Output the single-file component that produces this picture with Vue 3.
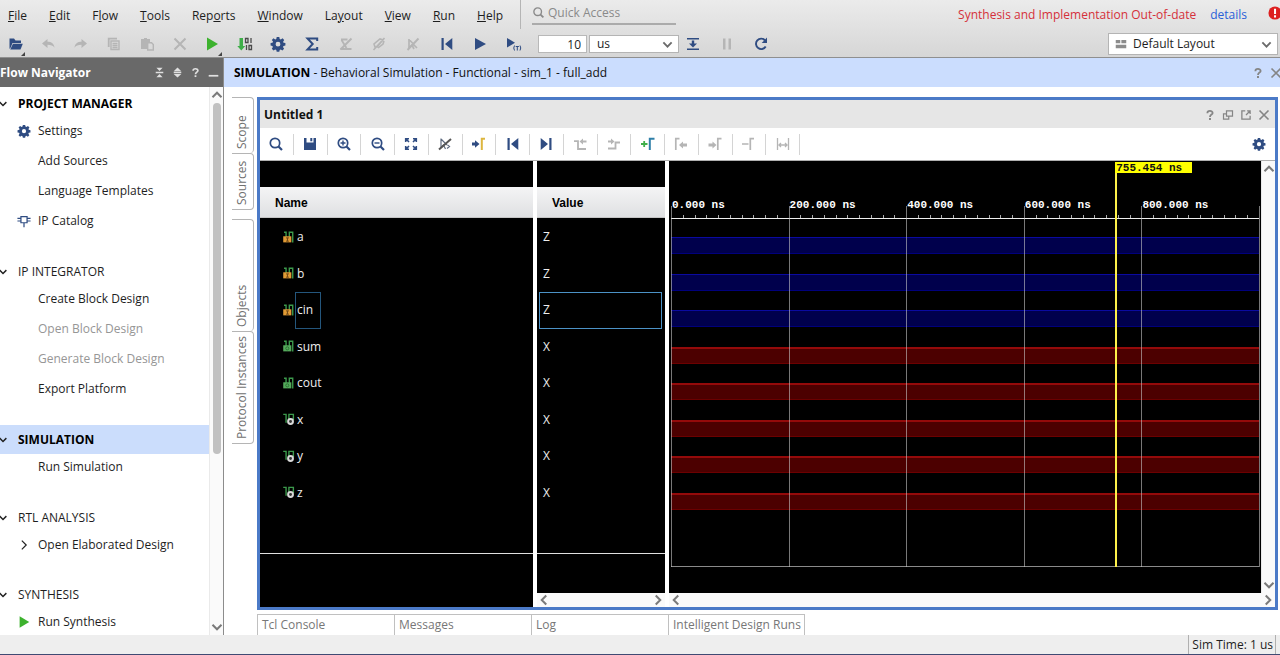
<script setup>
import { ref } from 'vue'

const N = '#2f4c82'
const G = '#b5b5b5'

const gear = `<path fill="${N}" fill-rule="evenodd" d="M6.700 1h2.600l.4 1.900 1.100.5 1.700-1.100 1.700 1.700-1.100 1.700.4 1 1.900.4v2.500l-1.900.4-.5 1.100 1.100 1.700-1.700 1.700-1.700-1.100-1 .5-.4 1.900H6.700l-.4-1.900-1.100-.5-1.700 1.100-1.700-1.700 1.100-1.700-.5-1.100L.6 9.600V7.100l1.900-.4.5-1.100-1.200-1.600 1.700-1.700 1.700 1.100 1.100-.5zM8 5.800a2.400 2.400 0 1 0 0 4.800 2.400 2.400 0 0 0 0-4.800z"/>`
const lens = (inner, c = N) => `<circle cx="7" cy="7" r="4.700" fill="none" stroke="${c}" stroke-width="1.700"/><path d="M10.500 10.500l3.500 3.500" stroke="${c}" stroke-width="2.200"/>${inner}`
const stroke = (d, c = N, w = 1.5) => `<path d="${d}" fill="none" stroke="${c}" stroke-width="${w}"/>`
const fill = (d, c = N) => `<path d="${d}" fill="${c}"/>`
const corner = fill('M16 12v4h-4z', '#444')

const icons = {
  open: fill('M1.500 2.500h4.500l1.500 2H13V7H4.500L2.700 11.500 1.500 13z') + fill('M5 7.800h9.800L12.500 13.500H2.200z'),
  undo: fill('M2 7.500l5.500-4.500v2.800c4 0 6.500 1.700 7 6-1.500-2.300-3.500-3-7-3V12z', G),
  redo: fill('M14 7.500L8.500 3v2.800c-4 0-6.500 1.700-7 6 1.500-2.300 3.500-3 7-3V12z', G),
  copy: stroke('M2.700 11V2.700H11', G, 1.800) + stroke('M5 5h8v8.500H5zM6.500 7.500h5M6.500 9.500h5M6.500 11.500h5', G, 1.400),
  paste: fill('M2 3h3V2h3v1h3v3H8v7H2z', G) + stroke('M8.700 6.700h3.800l1.800 1.800v5.500H8.700z', G, 1.400),
  close: stroke('M2.500 2.500l11 11M13.500 2.500l-11 11', G, 2),
  run: fill('M3 1.500l11 6.500L3 14.500z', '#3db22e'),
  bits: fill('M2.500 2h3.500v8h2.300l-4 4.500L.3 10h2.200z', '#3fae49') + stroke('M8.500 2.500h2.500v4H8.500zM14 2v5M9.500 9v5M12 9.500h2.500v4H12z', '#4a4a4a', 1.300),
  gear,
  sigma: stroke('M13.200 5V2.500H3.500L8.700 8l-5.200 5.500h9.700V11', N, 2),
  cutA: stroke('M3 3.500h6.500M3.500 4l5 8M2.500 13h11', G, 1.800) + stroke('M2.500 13.500l11-11', G, 2),
  cutB: stroke('M4 11l-1-3 6-5 3 1-6 7zM7 12l5-4 1-3M2.500 14l11-12', G, 1.600),
  cutC: stroke('M4 3v9l3-3 2 4M8 8l4 4M4 3.500l4 4', G, 1.700) + stroke('M2.500 14l11-11.500', G, 1.900),
  first: fill('M2.500 2h2.200v12H2.500zM13.300 2v12L6 8z'),
  last: fill('M11.300 2h2.200v12h-2.200zM2.700 2v12L10 8z'),
  play: fill('M3 2l11 6-11 6z'),
  playT: fill('M1 2l8 4.800-8 4.800z') + stroke('M8.500 9.500q-1.500 2.500 0 5M14 9.500q1.500 2.500 0 5M9.700 10.500h3.200M11.300 10.500v4', N, 1),
  step: fill('M2 2h12v1.600H2zM2 12.400h12V14H2zM6.800 4.500h2.400v3H12l-4 4-4-4h2.800z'),
  pause: fill('M4 2.500h2.500v11H4zM9.500 2.500H12v11H9.500z', G),
  reload: stroke('M12.700 10.500A5.200 5.200 0 1 1 12 4.300', N, 1.900) + fill('M14 1.500v5.500H8.700z'),
  search: lens(''),
  save: fill('M2 2h2.500v4.500h7V2H14v12H2zM8.300 2h2v3.300h-2z'),
  zoomIn: lens(stroke('M4.500 7h5M7 4.500v5', N, 1.400)),
  zoomOut: lens(stroke('M4.500 7h5', N, 1.400)),
  fit: stroke('M2.700 6V2.700H6M10 2.700h3.300V6M13.300 10v3.300H10M6 13.300H2.700V10M3 3l3 3M13 3l-3 3M13 13l-3-3M3 13l3-3', N, 1.600),
  noCursor: stroke('M4 2.500v9l2.500-2.500L8.500 13M4 3l6 6M10.500 9l2 1.500-2.500 2', '#5f6b80', 1.200) + stroke('M2 13.500L14 3', '#555', 2),
  toCursor: fill('M1 6.500h3V4.300L8.500 8 4 11.700V9.500H1z') + stroke('M10.800 14V2.700H14', '#ddb63f', 2),
  prevEdge: stroke('M2 5.200h4V13h8', G, 1.800) + fill('M7.500 5.500L11 2.500v2h3.500v2H11v2z', G),
  nextEdge: stroke('M2 12.500h7.500V6.500H14', G, 1.800) + fill('M8.500 5.500L5 2.500v2H2v2h3v2z', G),
  addMark: stroke('M1 8h6.500M4.200 5v6', '#3fae49', 1.800) + stroke('M9.800 14V2.700H14.500', '#2f7fa8', 2),
  prevMark: stroke('M2.800 14V2.700H6.500', G, 1.700) + fill('M6 9l4-3.500v2h4v3h-4v2z', G),
  nextMark: stroke('M10.800 14V2.700H14.500', G, 1.700) + fill('M9.500 9L5.500 5.500v2h-4v3h4v2z', G),
  delMark: stroke('M1 8h6.500M9.300 14V2.700H13', G, 1.700),
  swap: stroke('M2.500 2v12M13.500 2v12M4 9h8M6 7L4 9l2 2M10 7l2 2-2 2', G, 1.300),
  help: stroke('M4.500 5.500C4.500 1.500 11.500 1.700 11.500 5.200 11.500 7.500 8 7.500 8 10.500', 'currentColor', 2.400) + fill('M6.700 12h2.600v2.600H6.700z', 'currentColor'),
  min: fill('M1 11.500h14V14H1z', 'currentColor'),
  collapse: fill('M2.500 7h11v2h-11zM3.500 1h9L8 5.700zM3.500 15h9L8 10.300z', 'currentColor'),
  expand: fill('M2.500 7h11v2h-11zM2.500 6L8 .8 13.500 6zM2.500 10L8 15.200 13.500 10z', 'currentColor'),
  x: stroke('M2 2l12 12M14 2L2 14', 'currentColor', 2.200),
  restore: stroke('M6 2.500h8v7H6zM9 9.500v4H2v-7h4', 'currentColor', 1.600),
  popout: stroke('M7 2.500H2.500v11h11V9M9.500 2.500h4v4M8 8l5-5', 'currentColor', 1.700),
  down: stroke('M2 5l6 6 6-6', 'currentColor', 2.700),
  up: stroke('M2 11l6-6 6 6', 'currentColor', 2.700),
  left: stroke('M11 2L5 8l6 6', 'currentColor', 2.700),
  right: stroke('M5 2l6 6-6 6', 'currentColor', 2.700),
  thinDown: stroke('M3.500 5.500L8 10l4.500-4.500', '#222', 1.900),
  thinRight: stroke('M5.500 3l5 5-5 5', '#222', 1.400),
  chip: stroke('M4.500 3h7v7h-7zM.5 5h4M.5 8h4M11.500 5h4M11.500 8h4M8 10v5', N, 1.400),
  layout: fill('M1 2.500h6v4.500H1zM8.500 2.500H15v4.500H8.500zM1 9h14v4.500H1z', '#8c8c8c'),
  alert: '<circle cx="8" cy="8" r="7.500" fill="#dd2020"/>' + fill('M6.900 3h2.300v6.200H6.900zM6.900 10.700h2.300v2.300H6.900z', '#fff'),
  input: stroke('M2.500 1.500H5V8M9 8V1.500h4.200V14', '#3c9a4c', 1.700) + fill('M1.500 6.500h10V14h-10z', '#e09a35') + stroke('M5 8.500h3.500M6.700 8.500v4M5 12.500h3.500', '#6d4715', 1.200),
  output: stroke('M2.500 1.500H5V8M9 8V1.500h4.200V14', '#3c9a4c', 1.700) + fill('M1.500 6.500h10V14h-10z', '#55a95c') + '<circle cx="6.500" cy="10.300" r="1.900" fill="none" stroke="#256a2d"/>',
  wire: stroke('M1.500 1.700H5V12M8.500 8V1.700H14V9', '#3c9a4c', 1.700) + '<circle cx="10.500" cy="10.500" r="3" fill="#333" stroke="#d8d8d8" stroke-width="2.400"/>',
}

const menus = [
  ['', 'F', 'ile'], ['', 'E', 'dit'], ['F', 'l', 'ow'], ['', 'T', 'ools'], ['Rep', 'o', 'rts'],
  ['', 'W', 'indow'], ['La', 'y', 'out'], ['', 'V', 'iew'], ['', 'R', 'un'], ['', 'H', 'elp'],
]

const mainTools = [
  ['open', 'Open', true], ['undo', 'Undo'], ['redo', 'Redo'], ['copy', 'Copy'], ['paste', 'Paste'],
  ['close', 'Delete'], ['run', 'Run', true], ['bits', 'Generate Bitstream'], ['gear', 'Settings'],
  ['sigma', 'Reports'], ['cutA', 'Mark'], ['cutB', 'Link'], ['cutC', 'Unselect'],
  ['first', 'Restart'], ['play', 'Run All'], ['playT', 'Run For'],
]
const simTools = [['step', 'Step'], ['pause', 'Break'], ['reload', 'Relaunch']]
const waveTools = [
  ['search', 'Find'], ['save', 'Save'], ['zoomIn', 'Zoom In'], ['zoomOut', 'Zoom Out'], ['fit', 'Zoom Fit'],
  ['noCursor', 'Pointer'], ['toCursor', 'Go to Cursor'], ['first', 'Go to Start'], ['last', 'Go to End'],
  ['prevEdge', 'Previous Transition'], ['nextEdge', 'Next Transition'], ['addMark', 'Add Marker'],
  ['prevMark', 'Previous Marker'], ['nextMark', 'Next Marker'], ['delMark', 'Delete Marker'], ['swap', 'Swap Cursors'],
]

const sections = [
  { title: 'PROJECT MANAGER', bold: true, items: [
    { text: 'Settings', icon: 'gear' }, { text: 'Add Sources' }, { text: 'Language Templates' }, { text: 'IP Catalog', icon: 'chip' }] },
  { title: 'IP INTEGRATOR', items: [
    { text: 'Create Block Design' }, { text: 'Open Block Design', off: true }, { text: 'Generate Block Design', off: true }, { text: 'Export Platform' }] },
  { title: 'SIMULATION', bold: true, active: true, items: [{ text: 'Run Simulation' }] },
  { title: 'RTL ANALYSIS', items: [{ text: 'Open Elaborated Design', icon: 'thinRight' }] },
  { title: 'SYNTHESIS', items: [{ text: 'Run Synthesis', icon: 'run' }] },
]

const signals = [
  { name: 'a', value: 'Z', icon: 'input' }, { name: 'b', value: 'Z', icon: 'input' },
  { name: 'cin', value: 'Z', icon: 'input' }, { name: 'sum', value: 'X', icon: 'output' },
  { name: 'cout', value: 'X', icon: 'output' }, { name: 'x', value: 'X', icon: 'wire' },
  { name: 'y', value: 'X', icon: 'wire' }, { name: 'z', value: 'X', icon: 'wire' },
]
const selected = ref('cin')
const cursor = 755.454
const span = 1000
const marks = [0, 200, 400, 600, 800]
const ticks = Array.from({ length: 50 }, (_, i) => i * 20).filter((t) => t % 200)
const pct = (t) => (t / span) * 100 + '%'

const runTime = ref('10')
const unit = ref('us')
const layout = ref('Default Layout')
const quick = ref('')
const consoles = ['Tcl Console', 'Messages', 'Log', 'Intelligent Design Runs']
</script>

<template>
  <div class="app">
    <header class="top">
      <div class="menubar">
        <nav class="menus">
          <button v-for="m in menus" :key="m.join('')" class="menu">{{ m[0] }}<u>{{ m[1] }}</u>{{ m[2] }}</button>
        </nav>
        <label class="quick">
          <svg class="ic" viewBox="0 0 16 16" v-html="lens('', '#8a8a8a')"></svg>
          <input v-model="quick" type="text" placeholder="Quick Access" aria-label="Quick Access" />
        </label>
        <div class="stale">
          <span>Synthesis and Implementation Out-of-date</span>
          <a href="#">details</a>
          <svg class="ic alert" viewBox="0 0 16 16" v-html="icons.alert"></svg>
        </div>
      </div>
      <div class="toolbar">
        <div class="tools">
          <button v-for="t in mainTools" :key="t[1]" class="tool" :aria-label="t[1]">
            <svg class="ic" viewBox="0 0 16 16" v-html="icons[t[0]]"></svg>
            <svg v-if="t[2]" class="more" viewBox="12 12 4 4" v-html="corner"></svg>
          </button>
        </div>
        <input v-model="runTime" class="time" type="text" aria-label="Run time" />
        <div class="pick unit">
          <select v-model="unit" aria-label="Time unit"><option>us</option><option>ns</option></select>
          <svg class="ic arrow" viewBox="0 0 16 16" v-html="icons.down"></svg>
        </div>
        <div class="tools sim">
          <button v-for="t in simTools" :key="t[1]" class="tool" :aria-label="t[1]">
            <svg class="ic" viewBox="0 0 16 16" v-html="icons[t[0]]"></svg>
          </button>
        </div>
        <div class="pick layout">
          <svg class="ic lead" viewBox="0 0 16 16" v-html="icons.layout"></svg>
          <select v-model="layout" aria-label="Window layout"><option>Default Layout</option></select>
          <svg class="ic arrow" viewBox="0 0 16 16" v-html="icons.down"></svg>
        </div>
      </div>
    </header>

    <div class="main">
      <aside class="flow">
        <div class="flowhead">
          <h2>Flow Navigator</h2>
          <button v-for="i in ['collapse', 'expand', 'help', 'min']" :key="i" class="mini" :aria-label="i">
            <svg class="ic" viewBox="0 0 16 16" v-html="icons[i]"></svg>
          </button>
        </div>
        <div class="flowbody">
          <div class="tree">
            <section v-for="s in sections" :key="s.title">
              <button class="sec" :class="{ bold: s.bold, active: s.active }">
                <svg class="ic" viewBox="0 0 16 16" v-html="icons.thinDown"></svg>{{ s.title }}
              </button>
              <ul>
                <li v-for="i in s.items" :key="i.text">
                  <button class="item" :disabled="i.off">
                    <svg class="ic" viewBox="0 0 16 16" v-html="i.icon ? icons[i.icon] : ''"></svg>{{ i.text }}
                  </button>
                </li>
              </ul>
            </section>
          </div>
          <div class="vbar">
            <svg class="ic" viewBox="0 0 16 16" v-html="icons.up"></svg>
            <div class="track"><div class="thumb"></div></div>
            <svg class="ic" viewBox="0 0 16 16" v-html="icons.down"></svg>
          </div>
        </div>
      </aside>

      <div class="work">
        <div class="simhead">
          <h1><b>SIMULATION</b> - Behavioral Simulation - Functional - sim_1 - full_add</h1>
          <button class="mini" aria-label="Help"><svg class="ic" viewBox="0 0 16 16" v-html="icons.help"></svg></button>
          <button class="mini" aria-label="Close"><svg class="ic" viewBox="0 0 16 16" v-html="icons.x"></svg></button>
        </div>
        <div class="area">
          <div class="sidetabs">
            <div class="group">
              <button class="stab half"><span>Scope</span></button>
              <button class="stab half"><span>Sources</span></button>
            </div>
            <div class="group">
              <button class="stab"><span>Objects</span></button>
              <button class="stab"><span>Protocol Instances</span></button>
            </div>
          </div>
          <div class="center">
            <section class="panel">
              <div class="title">
                <h2>Untitled 1</h2>
                <button v-for="i in ['help', 'restore', 'popout', 'x']" :key="i" class="mini" :aria-label="i">
                  <svg class="ic" viewBox="0 0 16 16" v-html="icons[i]"></svg>
                </button>
              </div>
              <div class="wavebar">
                <div class="wtools">
                  <button v-for="t in waveTools" :key="t[1]" class="wtool" :aria-label="t[1]">
                    <svg class="ic" viewBox="0 0 16 16" v-html="icons[t[0]]"></svg>
                  </button>
                </div>
                <button class="wset" aria-label="Waveform settings"><svg class="ic" viewBox="0 0 16 16" v-html="icons.gear"></svg></button>
              </div>
              <div class="viewer">
                <div class="pane names">
                  <table>
                    <thead><tr><th>Name</th></tr></thead>
                    <tbody>
                      <tr v-for="s in signals" :key="s.name">
                        <td>
                          <svg class="ic" viewBox="0 0 16 16" v-html="icons[s.icon]"></svg>
                          <span class="sig" :class="{ on: s.name === selected }">{{ s.name }}</span>
                        </td>
                      </tr>
                    </tbody>
                  </table>
                  <div class="rest"></div>
                  <div class="foot"></div>
                </div>
                <div class="pane values">
                  <table>
                    <thead><tr><th>Value</th></tr></thead>
                    <tbody>
                      <tr v-for="s in signals" :key="s.name">
                        <td :class="{ on: s.name === selected }">{{ s.value }}</td>
                      </tr>
                    </tbody>
                  </table>
                  <div class="rest"></div>
                  <div class="foot"></div>
                  <div class="hbar">
                    <svg class="ic" viewBox="0 0 16 16" v-html="icons.left"></svg>
                    <svg class="ic" viewBox="0 0 16 16" v-html="icons.right"></svg>
                  </div>
                </div>
                <div class="wavepane">
                  <div class="wrow">
                    <div class="wave">
                      <div class="ruler">
                        <i v-for="t in ticks" :key="t" class="tick" :style="{ left: pct(t) }"></i>
                        <span v-for="m in marks" :key="m" class="mark" :style="{ left: pct(m) }">{{ m.toFixed(3) }} ns</span>
                      </div>
                      <div class="plot">
                        <div class="traces">
                          <div v-for="s in signals" :key="s.name" class="trace"><div :class="s.value === 'Z' ? 'hiz' : 'unk'"></div></div>
                        </div>
                      </div>
                      <i v-for="m in [...marks, span]" :key="m" class="line" :style="{ left: pct(m) }"></i>
                      <div class="cursor" :style="{ left: pct(cursor) }"><span>{{ cursor }} ns</span></div>
                    </div>
                    <div class="vbar plain">
                      <svg class="ic" viewBox="0 0 16 16" v-html="icons.up"></svg>
                      <svg class="ic" viewBox="0 0 16 16" v-html="icons.down"></svg>
                    </div>
                  </div>
                  <div class="hbar">
                    <svg class="ic" viewBox="0 0 16 16" v-html="icons.left"></svg>
                    <svg class="ic" viewBox="0 0 16 16" v-html="icons.right"></svg>
                  </div>
                </div>
              </div>
            </section>
            <div class="consoles">
              <button v-for="c in consoles" :key="c">{{ c }}</button>
            </div>
          </div>
        </div>
      </div>
    </div>

    <footer class="status"><span>Sim Time: 1 us</span></footer>
  </div>
</template>

<style>
body { margin: 0; overflow: hidden; }
</style>

<style scoped>
.app {
  display: flex; flex-direction: column; min-height: 100vh; overflow: hidden; background: #fff; color: #1e1e1e;
  font: 12px/16px "Open Sans", "Noto Sans", sans-serif;
}
.app *, .app *::before { box-sizing: border-box; }
button, input, select { font: inherit; color: inherit; margin: 0; padding: 0; border: 0; background: none; }
h1, h2, ul { margin: 0; padding: 0; font-size: 12px; font-weight: 400; list-style: none; }
.ic { width: 16px; height: 16px; display: block; flex: none; }

.top { background: linear-gradient(#ebebeb, #d6d6d6); border-bottom: 1px solid #8f8f8f; }
.menubar { display: flex; height: 29px; }
.menus { display: flex; gap: 22px; padding: 2px 0 0 8px; width: 521px; border-right: 1px solid #b5b5b5; }
.menu { white-space: nowrap; }
.quick { display: flex; align-items: center; gap: 3px; width: 144px; height: 25px; padding-top: 2px; margin-left: 11px; border-bottom: 2px solid #ababab; }
.quick .ic { width: 13px; height: 13px; }
.quick input { flex: 1; min-width: 0; outline: 0; }
.quick input::placeholder { color: #8a8a8a; opacity: 1; }
.stale { margin-left: auto; display: flex; align-items: center; gap: 14px; color: #d5303a; white-space: nowrap; }
.stale a { color: #2a5fd8; text-decoration: none; }
.alert { width: 14px; height: 14px; margin: 0 -2px 4px 7px; }
.toolbar { display: flex; align-items: center; height: 28px; padding: 2px 2px 0 0; }
.tools { display: grid; grid-template-columns: 31px repeat(5, 33px) 32px repeat(9, 1fr); width: 531px; height: 24px; }
.tools.sim { grid-template-columns: repeat(3, 1fr); width: 102px; }
.tool { position: relative; display: grid; place-items: center; }
.more { position: absolute; right: 6px; bottom: 0; width: 4px; height: 4px; }
.time { width: 49px; height: 18px; margin-left: 7px; padding-right: 5px; text-align: right; background: #fff; border: 1px solid #b8b8b8; }
.pick { position: relative; display: flex; align-items: center; background: #fff; border: 1px solid #b4b4b4; }
.pick select { appearance: none; flex: 1; height: 100%; padding-left: 7px; }
.arrow { position: absolute; right: 5px; width: 11px; height: 11px; color: #6b6b6b; pointer-events: none; }
.unit { width: 90px; height: 18px; margin: 0 -3px 0 2px; }
.layout { width: 170px; height: 22px; margin-left: auto; }
.layout select { padding-left: 24px; }
.lead { position: absolute; left: 6px; width: 12px; height: 12px; }

.main { flex: 1; display: flex; }
.flow { width: 224px; display: flex; flex-direction: column; border-right: 1px solid #8c8c8c; }
.flowhead { display: flex; align-items: center; gap: 7px; height: 29px; padding-right: 4px; background: #696969; color: #fff; }
.flowhead h2 { flex: 1; font-weight: 700; }
.mini { display: grid; place-items: center; color: #858585; }
.mini .ic { width: 12px; height: 12px; }
.flowhead .mini { color: #e0e0e0; }
.flowhead .mini .ic { width: 11px; height: 11px; }
.flowbody { flex: 1; display: flex; }
.tree { flex: 1; padding-top: 2px; }
.tree section + section { margin-top: 23px; }
.tree section:last-child { margin-top: 22px; }
.tree ul { display: grid; gap: 4px; }
.sec { display: flex; align-items: center; gap: 9px; width: 100%; height: 29px; text-align: left; }
.sec .ic { width: 12px; height: 12px; margin-left: -3px; }
.sec.bold { font-weight: 700; color: #000; }
.sec.active { background: #cbddfc; }
.item { display: flex; align-items: center; gap: 6px; height: 26px; padding-left: 18px; white-space: nowrap; }
.item .ic { width: 14px; height: 14px; margin-left: -1px; margin-right: 1px; }
.item:disabled { color: #969696; }
.vbar { display: flex; flex-direction: column; align-items: center; justify-content: space-between; width: 14px; padding: 2px 0; background: #fafafa; border-left: 1px solid #eaeaea; color: #7a7a7a; }
.vbar .ic { width: 12px; height: 12px; }
.track { flex: 1; padding: 2px 0; }
.thumb { width: 8px; height: 68%; border-radius: 4px; background: #c1c1c1; }

.work { flex: 1; min-width: 0; display: flex; flex-direction: column; }
.simhead { display: flex; align-items: center; gap: 6px; height: 29px; padding-left: 10px; margin-right: -2px; background: #cbddfe; color: #111; }
.simhead h1 { flex: 1; }
.simhead b { color: #000; }
.area { flex: 1; display: flex; padding-top: 10px; }
.sidetabs { width: 22px; margin: 0 3px 0 8px; display: flex; flex-direction: column; gap: 9px; }
.stab { display: flex; width: 22px; height: 112px; border: solid #b5b5b5; border-width: 1px 1px 0 0; border-radius: 0 4px 4px 0; color: #707070; }
.stab:last-child { border-bottom-width: 1px; height: 113px; }
.stab.half { height: 56px; }
.stab.half:last-child { height: 57px; }
.stab span { writing-mode: vertical-rl; transform: rotate(180deg); width: 20px; height: 100%; padding-top: 4px; line-height: 20px; text-align: left; white-space: nowrap; }
.center { flex: 1; min-width: 0; display: flex; flex-direction: column; gap: 4px; padding-right: 2px; }
.panel { flex: 1; display: flex; flex-direction: column; border: 3px solid #4b7ac7; }
.title { display: flex; align-items: center; gap: 6px; height: 28px; padding: 2px 5px 0 4px; background: #e6e6e6; }
.title h2 { flex: 1; font-weight: 700; color: #111; }
.wavebar { display: flex; align-items: center; height: 33px; padding-right: 9px; border-bottom: 1px solid #b0b0b0; }
.wtools { display: grid; grid-template-columns: repeat(16, 1fr); width: 540px; height: 21px; }
.wtool { display: grid; place-items: center; border-right: 1px solid #d4d4d4; }
.wset { margin-left: auto; }
.wset .ic { width: 14px; height: 14px; }

.viewer { flex: 1; display: flex; gap: 4px; }
.pane { display: flex; flex-direction: column; padding-top: 26px; background: #000; color: #eee; }
.names { width: 273px; }
.values { width: 128px; }
table { display: block; }
thead, thead tr, tbody tr { display: block; }
th { display: flex; align-items: center; height: 31px; padding: 2px 0 0 15px; background: linear-gradient(#f4f4f5, #dfe0e2); border-bottom: 1px solid #c4c4c4; color: #000; font: 700 12px/16px "Liberation Sans", Arial, sans-serif; }
tbody, .traces { display: grid; grid-template-rows: repeat(8, 1fr); height: 292px; margin-top: 1px; }
tbody tr { display: flex; }
td { flex: 1; display: flex; align-items: center; padding: 0 0 0 22px; }
td .ic { width: 13px; height: 13px; }
.sig { display: flex; align-items: center; height: 100%; padding: 0 7px 0 1px; border: 1px solid transparent; }
.sig.on { border-color: #24567c; }
.values td { padding-left: 3px; margin: 0 3px 0 2px; border: 1px solid transparent; }
.values td.on { border-color: #4c92c6; }
.rest { flex: 1; border-bottom: 1px solid #e0e0e0; }
.foot { height: 53px; }
.values .foot { height: 39px; }
.hbar { display: flex; align-items: center; justify-content: space-between; height: 14px; padding: 0 1px; background: #fafafa; color: #7a7a7a; }
.hbar .ic, .vbar.plain .ic { width: 12px; height: 12px; }
.wavepane { flex: 1; display: flex; flex-direction: column; }
.wrow { flex: 1; display: flex; }
.wave { position: relative; flex: 1; display: flex; flex-direction: column; border: solid #000; border-width: 0 2px 26px; background: #000; }
.ruler { position: relative; height: 58px; border-bottom: 1px solid #eee; }
.mark { position: absolute; bottom: 6px; padding-left: 1px; color: #fff; font: 700 11px/14px "Liberation Mono", monospace; white-space: nowrap; }
.tick { position: absolute; bottom: 0; width: 1px; height: 3px; background: #aaa; }
.plot { flex: 1; border-bottom: 1px solid #8a8a8a; }
.trace { padding-top: 17px; }
.trace div { height: 17px; }
.hiz { background: #00004c; border-top: 1px solid #0a0aa0; border-bottom: 1px solid #00007c; }
.unk { background: #4c0000; border-top: 2px solid #940a0a; border-bottom: 1px solid #6c0000; }
.line { position: absolute; top: 45px; bottom: 0; width: 1px; background: rgba(200, 200, 200, 0.6); }
.cursor { position: absolute; top: 1px; bottom: 0; width: 2px; background: #fdf04a; }
.cursor span { display: block; width: 77px; height: 11px; padding-left: 1px; overflow: hidden; background: #ff0; color: #111; font: 700 11px/12px "Liberation Mono", monospace; white-space: nowrap; }

.consoles { display: flex; height: 21px; }
.consoles button { width: 137px; padding-left: 4px; text-align: left; color: #777; border: solid #c0c0c0; border-width: 1px 0 0 1px; white-space: nowrap; }
.consoles button:last-child { border-right-width: 1px; }
.status { display: flex; justify-content: flex-end; height: 20px; padding-right: 4px; background: #eee; border-bottom: 1px solid #3f4a73; }
.status span { padding: 2px 2px 0 3px; border: solid #b0b0b0; border-width: 0 1px; }
</style>
